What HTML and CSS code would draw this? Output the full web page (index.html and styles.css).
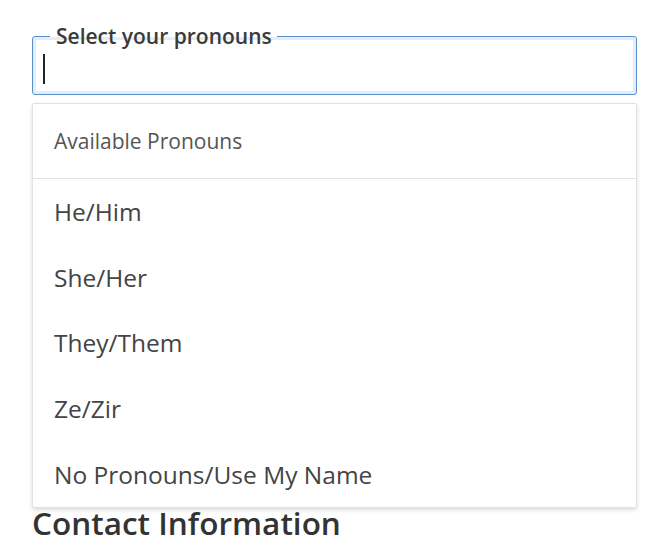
FILE: index.html
```html
<!DOCTYPE html>
<html lang="en">
<head>
<meta charset="utf-8">
<title>Select your pronouns</title>
<link rel="stylesheet" href="styles.css">
</head>
<body>
<div class="page">
  <fieldset class="field">
    <legend class="field-label">Select your pronouns</legend>
    <div class="field-input"><span class="caret"></span></div>
  </fieldset>
  <div class="menu">
    <div class="menu-header">Available Pronouns</div>
    <ul class="menu-list">
      <li class="menu-item">He/Him</li>
      <li class="menu-item">She/Her</li>
      <li class="menu-item">They/Them</li>
      <li class="menu-item">Ze/Zir</li>
      <li class="menu-item">No Pronouns/Use My Name</li>
    </ul>
  </div>
  <h2 class="section-title">Contact Information</h2>
</div>
</body>
</html>
```
FILE: styles.css
```css
html, body {
  margin: 0;
  padding: 0;
  background: #ffffff;
}
body {
  font-family: "Open Sans", "Noto Sans", sans-serif;
  color: #444;
}
.page {
  padding: 26px 29px 0 32px;
}
.field {
  margin: 0;
  padding: 0 3px 3px 3px;
  border: 1px solid #5990cb;
  border-radius: 3px;
  box-shadow: inset 0 0 0 3px #e2edf9;
}
.field-label {
  margin-left: 14px;
  padding: 0 5px 0 6px;
  font-size: 21px;
  font-weight: 600;
  line-height: 20px;
  color: #3a3a3a;
}
.field-input {
  height: 45px;
  display: flex;
  align-items: center;
  padding-left: 7px;
}
.caret {
  display: block;
  width: 2px;
  height: 30px;
  background: #222;
}
.menu {
  margin-top: 8px;
  border: 1px solid #e2e2e2;
  border-radius: 2px;
  box-shadow: 0 2px 4px rgba(0, 0, 0, 0.14);
  background: #fff;
}
.menu-header {
  height: 74px;
  display: flex;
  align-items: center;
  padding-left: 21px;
  font-size: 21px;
  color: #555;
  border-bottom: 1px solid #e0e0e0;
}
.menu-list {
  list-style: none;
  margin: 0;
  padding: 0;
}
.menu-item {
  height: 65.6px;
  display: flex;
  align-items: center;
  padding-left: 21px;
  font-size: 24.5px;
  color: #444;
}
.section-title {
  margin: -3px 0 0 0;
  font-size: 31.5px;
  font-weight: 600;
  line-height: 36px;
  color: #333;
  padding-left: 0;
}
```
